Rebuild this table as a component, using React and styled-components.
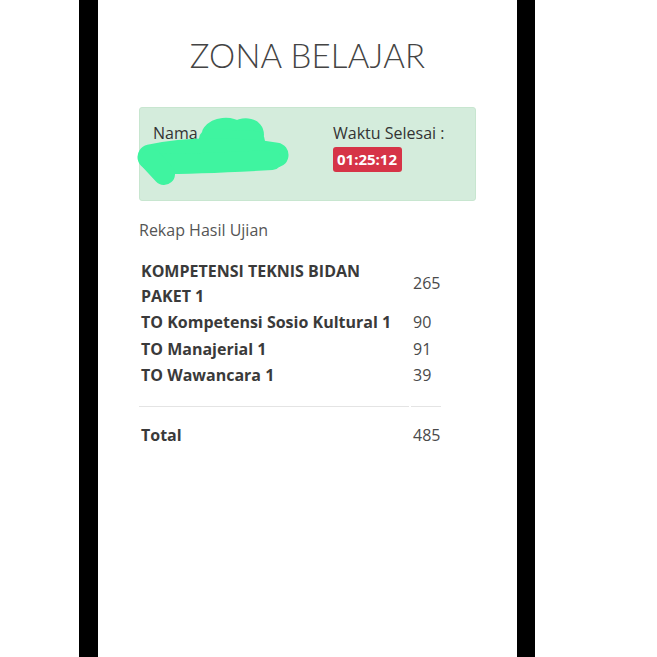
import React from "react";
import styled, { createGlobalStyle } from "styled-components";

const Global = createGlobalStyle`
  html, body { margin: 0; padding: 0; background: #fff; }
  body { font-family: "Open Sans", "Liberation Sans", sans-serif; color: #444; }
`;

const Page = styled.div`
  display: flex;
  height: 657px;
  width: 657px;
  background: #fff;
`;

const Gutter = styled.div`
  width: ${(p) => p.$w}px;
  flex: none;
  background: #fff;
`;

const Bar = styled.div`
  width: ${(p) => p.$w}px;
  flex: none;
  background: #000;
`;

const Content = styled.div`
  width: 419px;
  flex: none;
  box-sizing: border-box;
  padding: 0 41px;
  background: #fff;
`;

const Title = styled.h1`
  margin: 33px 0 0;
  height: 74px;
  text-align: center;
  font-family: "Lato", "Open Sans", sans-serif;
  font-weight: 300;
  font-size: 33px;
  line-height: 44px;
  letter-spacing: 0.2px;
  color: #444;
`;

const InfoBox = styled.div`
  position: relative;
  box-sizing: border-box;
  height: 94px;
  background: #d4ecdc;
  border: 1px solid #c8e6d0;
  border-radius: 3px;
  display: grid;
  grid-template-columns: 180px 1fr;
  padding: 13px 13px;
`;

const Label = styled.div`
  font-size: 16px;
  line-height: 24px;
  color: #333;
`;

const Badge = styled.span`
  display: inline-block;
  margin-top: 2px;
  background: #d63447;
  color: #fff;
  font-weight: 700;
  font-size: 15px;
  line-height: 19px;
  padding: 3px 5px 3px 4px;
  border-radius: 3px;
`;

const Scribble = styled.svg`
  position: absolute;
  left: -3px;
  top: -1px;
  width: 160px;
  height: 85px;
`;

const Subtitle = styled.div`
  margin-top: 17px;
  font-size: 16px;
  line-height: 24px;
  color: #555;
`;

const Table = styled.div`
  margin-top: 16px;
  display: grid;
  grid-template-columns: 270px 30px;
  column-gap: 2px;
  align-items: center;
`;

const Name = styled.div`
  font-weight: 700;
  font-size: 16px;
  line-height: 24.5px;
  color: #3a3a3a;
  padding: 1px 2px;
`;

const Value = styled.div`
  font-size: 16px;
  line-height: 24.5px;
  color: #4a4a4a;
  padding: 1px 0 1px 2px;
`;

const Rule = styled.div`
  height: 1px;
  background: #e4e4e4;
  margin: 17px 0 15px;
`;

const rows = [
  ["KOMPETENSI TEKNIS BIDAN PAKET 1", 265],
  ["TO Kompetensi Sosio Kultural 1", 90],
  ["TO Manajerial 1", 91],
  ["TO Wawancara 1", 39],
];

export default function App() {
  return (
    <>
      <Global />
      <Page>
        <Gutter $w={79} />
        <Bar $w={19} />
        <Content>
          <Title>ZONA BELAJAR</Title>
          <InfoBox>
            <div>
              <Label>Nama</Label>
            </div>
            <div>
              <Label>Waktu Selesai :</Label>
              <Badge>01:25:12</Badge>
            </div>
            <Scribble viewBox="0 0 160 85">
              <g fill="none" stroke="#3ff4a0" strokeLinecap="round" strokeLinejoin="round">
                <path d="M74 26 C80 19 92 18 100 23 C108 18 118 20 118 28" strokeWidth="18" />
                <path d="M72 32 L118 34" strokeWidth="20" />
                <path d="M13 50 C50 42 100 42 139 48" strokeWidth="25" />
                <path d="M20 57 C60 57 100 55 135 53" strokeWidth="20" />
                <path d="M14 53 L27 67" strokeWidth="22" />
              </g>
            </Scribble>
          </InfoBox>
          <Subtitle>Rekap Hasil Ujian</Subtitle>
          <Table>
            {rows.map(([n, v]) => (
              <React.Fragment key={n}>
                <Name>{n}</Name>
                <Value>{v}</Value>
              </React.Fragment>
            ))}
            <Rule />
            <Rule />
            <Name>Total</Name>
            <Value>485</Value>
          </Table>
        </Content>
        <Bar $w={18} />
        <Gutter $w={122} />
      </Page>
    </>
  );
}
